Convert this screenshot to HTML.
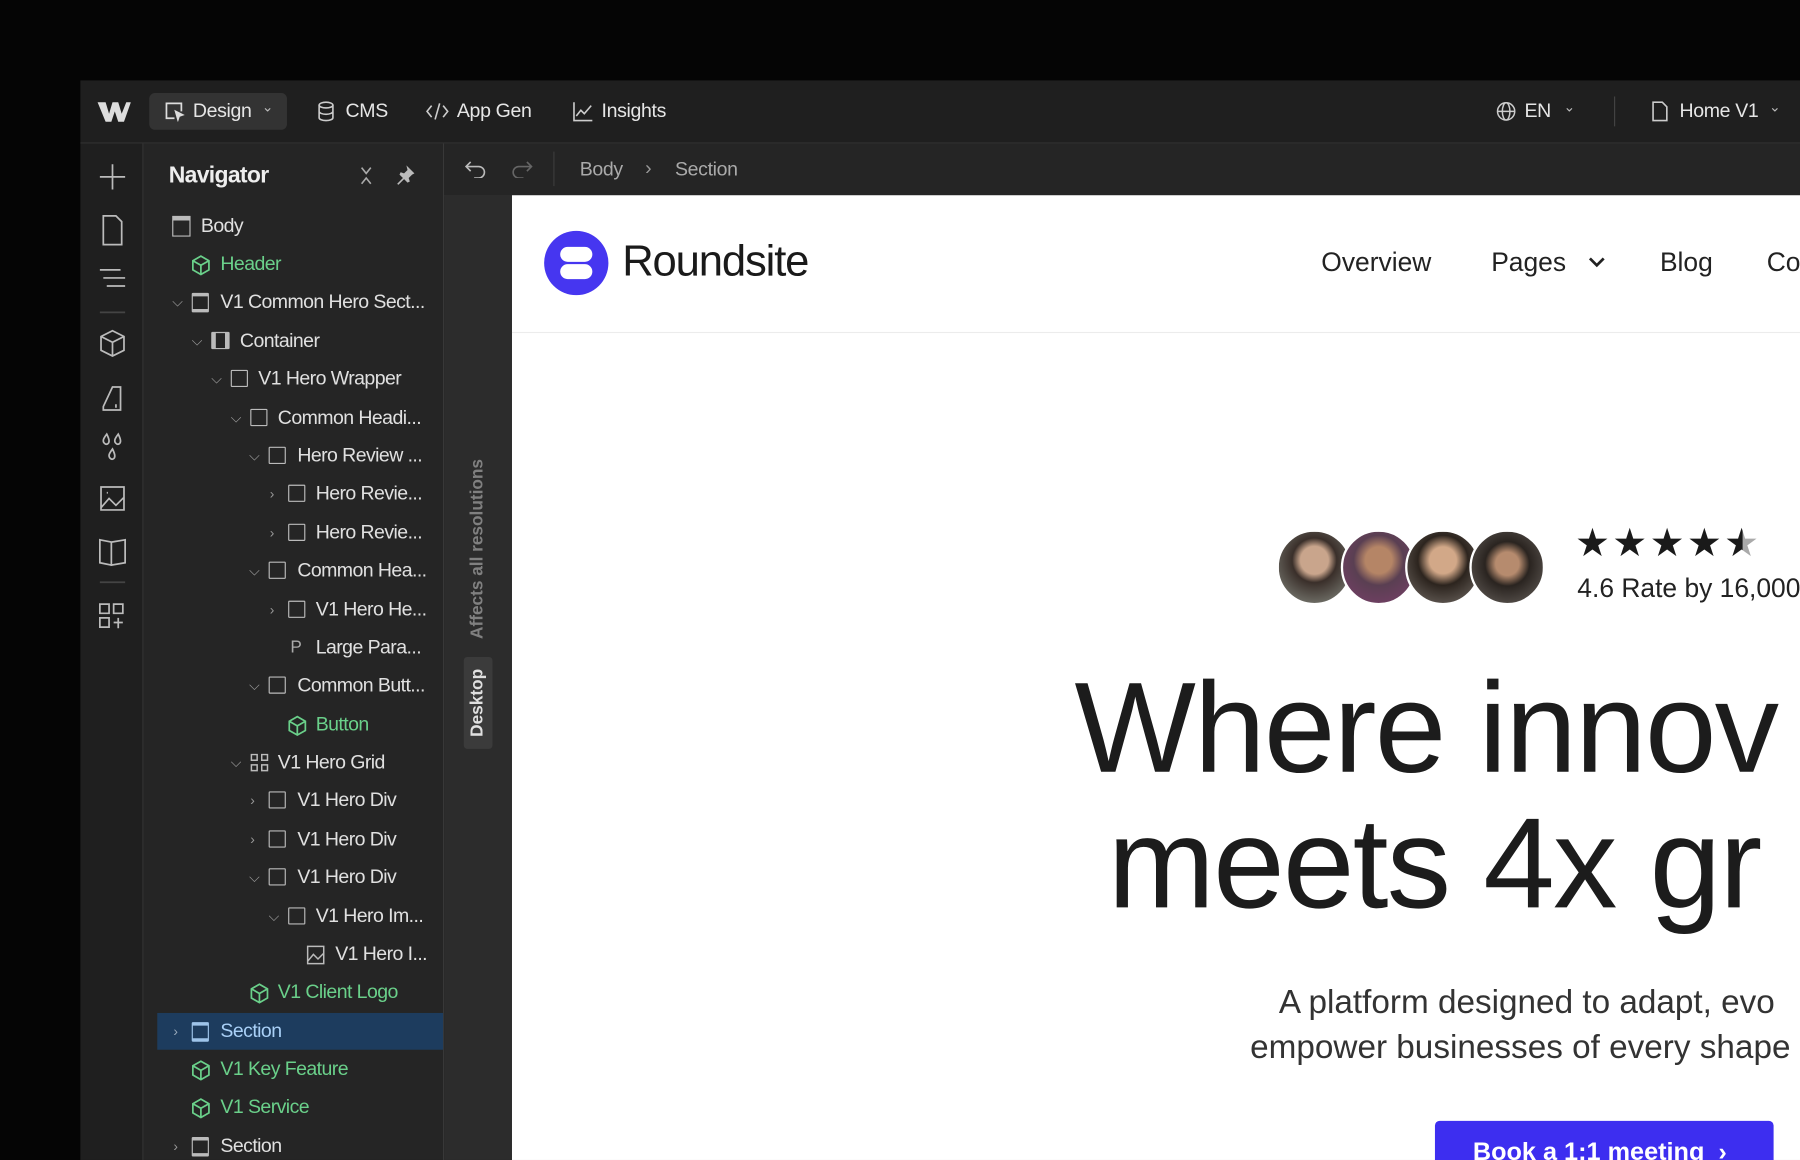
<!DOCTYPE html>
<html><head><meta charset="utf-8">
<style>
html,body{margin:0;padding:0;background:#050505;width:1800px;height:1160px;overflow:hidden}
#s{position:absolute;left:0;top:0;width:1568px;height:1010px;transform:scale(1.14796,1.1485);transform-origin:0 0;font-family:"Liberation Sans",sans-serif;overflow:hidden}
.a{position:absolute}
.tb{left:70px;top:70px;width:1498px;height:54px;background:#1f1f1f;border-bottom:1px solid #333}
.tt{color:#e6e6e6;font-size:17px;letter-spacing:-.3px}
.rail{left:70px;top:125px;width:54px;height:885px;background:#1f1f1f;border-right:1px solid #333}
.nav{left:125px;top:125px;width:261px;height:885px;background:#252525;border-right:1px solid #3a3a3a}
.bc{left:387px;top:125px;width:1181px;height:45px;background:#252525;border-bottom:1px solid #3a3a3a}
.gut{left:387px;top:170px;width:59px;height:840px;background:#2c2c2c}
.cv{left:446px;top:170px;width:1122px;height:840px;background:#fff}
.row{position:absolute;height:20px;font-size:17px;color:#e0e0e0;letter-spacing:-.5px;white-space:nowrap;line-height:20px}
.row .ic{position:absolute;top:2px}
.g{color:#6ad08a}
.bx{width:13px;height:13px;border:1.5px solid #bbb;border-radius:1px;box-sizing:content-box}
.ar{position:absolute;color:#999;font-size:12px;top:0}
svg{display:block}
</style></head><body><div id="s">
<div class="a tb"></div>
<div class="a" style="left:84px;top:86px"><svg width="30" height="22" viewBox="0 0 30 22"><path d="M1 3h7l3 10 3-10h5l3 10 4-10h4l-6 17h-5l-3-9-3 9h-5z" fill="#ddd"/></svg></div>
<div class="a" style="left:130px;top:81px;width:120px;height:32px;background:#333;border-radius:5px"></div>
<div class="a" style="left:143px;top:88px"><svg width="18" height="18" viewBox="0 0 18 18" fill="none" stroke="#ddd" stroke-width="1.5"><path d="M9 15H2V2h13v7"/><path d="M10 9l6 3-3 1-1 3z" fill="#ddd"/></svg></div>
<div class="a tt" style="left:168px;top:87px">Design</div>
<div class="a tt" style="left:228px;top:86px;font-size:12px;color:#bbb">⌄</div>
<div class="a" style="left:276px;top:88px"><svg width="16" height="18" viewBox="0 0 16 18" fill="none" stroke="#ccc" stroke-width="1.4"><ellipse cx="8" cy="3.5" rx="6" ry="2.5"/><path d="M2 3.5v11c0 1.4 2.7 2.5 6 2.5s6-1.1 6-2.5v-11M2 9c0 1.4 2.7 2.5 6 2.5s6-1.1 6-2.5"/></svg></div>
<div class="a tt" style="left:301px;top:87px">CMS</div>
<div class="a" style="left:371px;top:89px"><svg width="20" height="16" viewBox="0 0 20 16" fill="none" stroke="#ccc" stroke-width="1.4"><path d="M5 3L1 8l4 5M15 3l4 5-4 5M12 1L8 15"/></svg></div>
<div class="a tt" style="left:398px;top:87px">App Gen</div>
<div class="a" style="left:499px;top:88px"><svg width="18" height="18" viewBox="0 0 18 18" fill="none" stroke="#ccc" stroke-width="1.4"><path d="M1 1v16h16M3 13l4-5 3 3 6-7"/></svg></div>
<div class="a tt" style="left:524px;top:87px">Insights</div>
<div class="a" style="left:1303px;top:88px"><svg width="18" height="18" viewBox="0 0 18 18" fill="none" stroke="#ccc" stroke-width="1.3"><circle cx="9" cy="9" r="7.5"/><ellipse cx="9" cy="9" rx="3.3" ry="7.5"/><path d="M1.5 9h15"/></svg></div>
<div class="a tt" style="left:1328px;top:87px">EN</div>
<div class="a tt" style="left:1362px;top:86px;font-size:12px;color:#bbb">⌄</div>
<div class="a" style="left:1406px;top:84px;width:1px;height:26px;background:#444"></div>
<div class="a" style="left:1439px;top:88px"><svg width="14" height="18" viewBox="0 0 14 18" fill="none" stroke="#ccc" stroke-width="1.4"><path d="M1 1h8l4 4v12H1z"/></svg></div>
<div class="a tt" style="left:1463px;top:87px">Home V1</div>
<div class="a tt" style="left:1541px;top:86px;font-size:12px;color:#bbb">⌄</div>
<div class="a rail"></div>
<svg class="a" style="left:84px;top:140px" width="28" height="420" viewBox="0 0 28 420" fill="none" stroke="#bbb" stroke-width="1.5">
<path d="M14 3v22M3 14h22"/>
<path d="M6 48h11l5 5v20H6z"/>
<path d="M3 95h18M6 102h19M9 109h16"/>
<path d="M3 132h22" stroke="#444"/>
<path d="M14 148l10 5v12l-10 5-10-5v-12zM4 153l10 5 10-5M14 158v12"/>
<path d="M6 214l8-17h7v20H6z M17 212v3"/>
<path d="M9 238c-3 4-4 6-2 8 2 2 4 0 4-2 0-2-2-6-2-6zM19 238c-3 4-4 6-2 8 2 2 4 0 4-2 0-2-2-6-2-6zM14 251c-3 4-4 6-2 8 2 2 4 0 4-2 0-2-2-6-2-6z"/>
<path d="M4 284h20v20H4zM4 302l7-8 6 6 7-7M9 289h1"/>
<path d="M3 330l10 2v20L3 350zM25 330l-12 2v20l12-2z"/>
<path d="M3 367h22" stroke="#444"/>
<path d="M3 386h8v8H3zM15 386h8v8h-8zM3 398h8v8H3zM19 398v9M15 402h8"/>
</svg>
<div class="a nav"></div>
<div class="a" style="left:147px;top:142px;color:#eee;font-size:20px;font-weight:bold;letter-spacing:-.6px">Navigator</div>
<div class="a" style="left:313px;top:145px"><svg width="12" height="16" viewBox="0 0 12 16" fill="none" stroke="#aaa" stroke-width="1.4"><path d="M2 1l4 5 4-5M2 15l4-5 4 5"/></svg></div>
<div class="a" style="left:344px;top:143px"><svg width="18" height="18" viewBox="0 0 18 18" fill="#bbb"><path d="M10 1l7 7-2 1-3 3 1 3-2 1-3-3-5 5-1-1 5-5-3-3 1-2 3 1 3-3z"/></svg></div>
<div class="a" style="left:137px;top:882px;width:249px;height:32px;background:#1d3c5e"></div>

<div class="row" style="left:150px;top:187px"><div class="ic" style="left:0;width:14px;height:13px;border:1.5px solid #bbb;border-top-width:4px;top:1px"></div><span style="position:absolute;left:25px">Body</span></div>
<div class="row g" style="left:166px;top:220px"><svg class="ic" style="left:0" width="18" height="18" viewBox="0 0 18 18" fill="none" stroke="#6ad08a" stroke-width="1.5"><path d="M9 1l7 4v8l-7 4-7-4V5zM2 5l7 4 7-4M9 9v8"/></svg><span style="position:absolute;left:26px">Header</span></div>
<div class="row" style="left:150px;top:253px"><span class="ar" style="left:0">⌵</span><div class="ic bx" style="left:17px;border-top-width:3px;border-bottom-width:3px;height:11px"></div><span style="position:absolute;left:42px">V1 Common Hero Sect...</span></div>
<div class="row" style="left:167px;top:287px"><span class="ar" style="left:0">⌵</span><div class="ic bx" style="left:17px;border-left-width:4px;border-right-width:4px;width:8px"></div><span style="position:absolute;left:42px">Container</span></div>
<div class="row" style="left:184px;top:320px"><span class="ar" style="left:0">⌵</span><div class="ic bx" style="left:17px"></div><span style="position:absolute;left:41px">V1 Hero Wrapper</span></div>
<div class="row" style="left:201px;top:354px"><span class="ar" style="left:0">⌵</span><div class="ic bx" style="left:17px"></div><span style="position:absolute;left:41px">Common Headi...</span></div>
<div class="row" style="left:217px;top:387px"><span class="ar" style="left:0">⌵</span><div class="ic bx" style="left:17px"></div><span style="position:absolute;left:42px">Hero Review ...</span></div>
<div class="row" style="left:235px;top:420px"><span class="ar" style="left:0">›</span><div class="ic bx" style="left:16px"></div><span style="position:absolute;left:40px">Hero Revie...</span></div>
<div class="row" style="left:235px;top:454px"><span class="ar" style="left:0">›</span><div class="ic bx" style="left:16px"></div><span style="position:absolute;left:40px">Hero Revie...</span></div>
<div class="row" style="left:217px;top:487px"><span class="ar" style="left:0">⌵</span><div class="ic bx" style="left:17px"></div><span style="position:absolute;left:42px">Common Hea...</span></div>
<div class="row" style="left:235px;top:521px"><span class="ar" style="left:0">›</span><div class="ic bx" style="left:16px"></div><span style="position:absolute;left:40px">V1 Hero He...</span></div>
<div class="row" style="left:253px;top:554px"><span style="position:absolute;left:0;color:#aaa;font-size:15px">P</span><span style="position:absolute;left:22px">Large Para...</span></div>
<div class="row" style="left:217px;top:587px"><span class="ar" style="left:0">⌵</span><div class="ic bx" style="left:17px"></div><span style="position:absolute;left:42px">Common Butt...</span></div>
<div class="row g" style="left:250px;top:621px"><svg class="ic" style="left:0" width="18" height="18" viewBox="0 0 18 18" fill="none" stroke="#6ad08a" stroke-width="1.5"><path d="M9 1l7 4v8l-7 4-7-4V5zM2 5l7 4 7-4M9 9v8"/></svg><span style="position:absolute;left:25px">Button</span></div>
<div class="row" style="left:201px;top:654px"><span class="ar" style="left:0">⌵</span><svg class="ic" style="left:17px" width="16" height="16" viewBox="0 0 16 16" fill="none" stroke="#bbb" stroke-width="1.3"><path d="M1 1h5v5H1zM10 1h5v5h-5zM1 10h5v5H1zM10 10h5v5h-5z"/></svg><span style="position:absolute;left:41px">V1 Hero Grid</span></div>
<div class="row" style="left:218px;top:687px"><span class="ar" style="left:0">›</span><div class="ic bx" style="left:16px"></div><span style="position:absolute;left:41px">V1 Hero Div</span></div>
<div class="row" style="left:218px;top:721px"><span class="ar" style="left:0">›</span><div class="ic bx" style="left:16px"></div><span style="position:absolute;left:41px">V1 Hero Div</span></div>
<div class="row" style="left:217px;top:754px"><span class="ar" style="left:0">⌵</span><div class="ic bx" style="left:17px"></div><span style="position:absolute;left:42px">V1 Hero Div</span></div>
<div class="row" style="left:234px;top:788px"><span class="ar" style="left:0">⌵</span><div class="ic bx" style="left:17px"></div><span style="position:absolute;left:41px">V1 Hero Im...</span></div>
<div class="row" style="left:267px;top:821px"><svg class="ic" style="left:0" width="16" height="17" viewBox="0 0 16 17" fill="none" stroke="#bbb" stroke-width="1.3"><path d="M1 1h14v15H1zM1 14l5-6 4 4 5-5"/></svg><span style="position:absolute;left:25px">V1 Hero I...</span></div>
<div class="row g" style="left:217px;top:854px"><svg class="ic" style="left:0" width="18" height="18" viewBox="0 0 18 18" fill="none" stroke="#6ad08a" stroke-width="1.5"><path d="M9 1l7 4v8l-7 4-7-4V5zM2 5l7 4 7-4M9 9v8"/></svg><span style="position:absolute;left:25px">V1 Client Logo</span></div>
<div class="row" style="left:151px;top:888px;color:#a9d0f7"><span class="ar" style="left:0;color:#9ab">›</span><div class="ic bx" style="left:16px;border-color:#9ec4ea;border-top-width:3px;border-bottom-width:3px;height:11px"></div><span style="position:absolute;left:41px">Section</span></div>
<div class="row g" style="left:166px;top:921px"><svg class="ic" style="left:0" width="18" height="18" viewBox="0 0 18 18" fill="none" stroke="#6ad08a" stroke-width="1.5"><path d="M9 1l7 4v8l-7 4-7-4V5zM2 5l7 4 7-4M9 9v8"/></svg><span style="position:absolute;left:26px">V1 Key Feature</span></div>
<div class="row g" style="left:166px;top:954px"><svg class="ic" style="left:0" width="18" height="18" viewBox="0 0 18 18" fill="none" stroke="#6ad08a" stroke-width="1.5"><path d="M9 1l7 4v8l-7 4-7-4V5zM2 5l7 4 7-4M9 9v8"/></svg><span style="position:absolute;left:26px">V1 Service</span></div>
<div class="row" style="left:151px;top:988px"><span class="ar" style="left:0">›</span><div class="ic bx" style="left:16px;border-top-width:3px;border-bottom-width:3px;height:11px"></div><span style="position:absolute;left:41px">Section</span></div>
<div class="a bc"></div>
<div class="a" style="left:405px;top:139px"><svg width="20" height="16" viewBox="0 0 20 16" fill="none" stroke="#bbb" stroke-width="1.4"><path d="M5 2L1 6l4 4M1 6h11a5 5 0 010 10H8"/></svg></div>
<div class="a" style="left:444px;top:139px"><svg width="20" height="16" viewBox="0 0 20 16" fill="none" stroke="#666" stroke-width="1.4"><path d="M15 2l4 4-4 4M19 6H8a5 5 0 000 10h4"/></svg></div>
<div class="a" style="left:482px;top:132px;width:1px;height:30px;background:#3c3c3c"></div>
<div class="a tt" style="left:505px;top:138px;color:#aaa">Body</div>
<div class="a tt" style="left:562px;top:137px;color:#999">›</div>
<div class="a tt" style="left:588px;top:138px;color:#aaa">Section</div>
<div class="a gut"></div>
<div class="a" style="left:404px;top:572px;width:25px;height:80px;background:#3b3b3b;border-radius:3px"></div>
<div class="a" style="left:416px;top:612px;transform:translate(-50%,-50%) rotate(-90deg);color:#e0e0e0;font-size:15px;font-weight:bold;white-space:nowrap">Desktop</div>
<div class="a" style="left:416px;top:478px;transform:translate(-50%,-50%) rotate(-90deg);color:#808080;font-size:15px;font-weight:bold;white-space:nowrap">Affects all resolutions</div>
<div class="a cv"></div>
<div class="a" style="left:474px;top:201px;width:56px;height:56px;border-radius:50%;background:#4636f0"></div>
<div class="a" style="left:488px;top:215px;width:28px;height:13px;border-radius:7px;background:#fff"></div>
<div class="a" style="left:488px;top:230px;width:28px;height:13px;border-radius:7px;background:#fff"></div>
<div class="a" style="left:542px;top:207px;font-size:38px;color:#1a1a1a;letter-spacing:-1px">Roundsite</div>
<div class="a" style="left:1151px;top:215px;font-size:23px;color:#222">Overview</div>
<div class="a" style="left:1299px;top:215px;font-size:23px;color:#222">Pages</div>
<div class="a" style="left:1383px;top:223px"><svg width="16" height="12" viewBox="0 0 16 12" fill="none" stroke="#222" stroke-width="2.4"><path d="M2 2l6 6 6-6"/></svg></div>
<div class="a" style="left:1446px;top:215px;font-size:23px;color:#222">Blog</div>
<div class="a" style="left:1539px;top:215px;font-size:23px;color:#222">Co</div>
<div class="a" style="left:446px;top:289px;width:1122px;height:1px;background:#ececec"></div>
<div class="a" style="left:1112px;top:461px;width:62px;height:62px;border-radius:50%;background:radial-gradient(circle at 50% 40%,#c9a58c 0 25%,#3a2f2a 40%,#8a8f86 100%);border:2px solid #fff"></div>
<div class="a" style="left:1168px;top:461px;width:62px;height:62px;border-radius:50%;background:radial-gradient(circle at 50% 40%,#b58566 0 24%,#5a3f52 45%,#7a3f6a 100%);border:2px solid #fff"></div>
<div class="a" style="left:1224px;top:461px;width:62px;height:62px;border-radius:50%;background:radial-gradient(circle at 50% 40%,#d2a888 0 24%,#2c241e 45%,#77706a 100%);border:2px solid #fff"></div>
<div class="a" style="left:1280px;top:461px;width:62px;height:62px;border-radius:50%;background:radial-gradient(circle at 50% 45%,#b68b6e 0 22%,#2a2420 42%,#6b6560 100%);border:2px solid #fff"></div>
<div class="a" style="left:1372px;top:453px;font-size:34px;color:#1a1a1a;letter-spacing:2px">★★★★<span style="background:linear-gradient(90deg,#1a1a1a 50%,#aaa 50%);-webkit-background-clip:text;background-clip:text;color:transparent">★</span></div>
<div class="a" style="left:1374px;top:499px;font-size:23px;color:#222;white-space:nowrap">4.6 Rate by 16,000</div>
<div class="a" style="left:936px;top:574px;font-size:112px;color:#1c1c1c;letter-spacing:-1.5px;white-space:nowrap;line-height:120px">Where innov</div>
<div class="a" style="left:965px;top:692px;font-size:112px;color:#1c1c1c;letter-spacing:-1.5px;white-space:nowrap;line-height:120px">meets 4x gr</div>
<div class="a" style="left:1114px;top:857px;font-size:29px;color:#333;white-space:nowrap;letter-spacing:0">A platform designed to adapt, evo</div>
<div class="a" style="left:1089px;top:896px;font-size:29px;color:#333;white-space:nowrap;letter-spacing:0">empower businesses of every shape</div>
<div class="a" style="left:1250px;top:976px;width:295px;height:50px;background:#3d2ef0;border-radius:4px"></div>
<div class="a" style="left:1283px;top:990px;font-size:22px;color:#fff;font-weight:bold;white-space:nowrap">Book a 1:1 meeting &nbsp;›</div>
</div></body></html>
